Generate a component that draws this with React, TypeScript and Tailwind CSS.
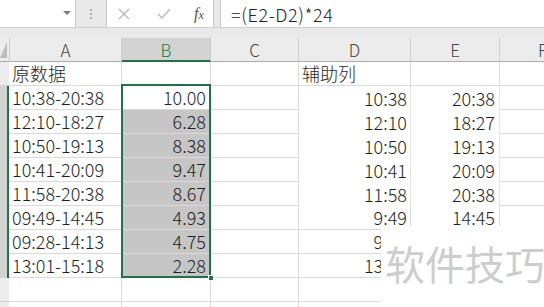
import React from "react";

const FONT = '"Noto Sans CJK SC", "Liberation Sans", sans-serif';

const rows: { a: string; b: string; d: string; e: string }[] = [
  { a: "原数据", b: "", d: "辅助列", e: "" },
  { a: "10:38-20:38", b: "10.00", d: "10:38", e: "20:38" },
  { a: "12:10-18:27", b: "6.28", d: "12:10", e: "18:27" },
  { a: "10:50-19:13", b: "8.38", d: "10:50", e: "19:13" },
  { a: "10:41-20:09", b: "9.47", d: "10:41", e: "20:09" },
  { a: "11:58-20:38", b: "8.67", d: "11:58", e: "20:38" },
  { a: "09:49-14:45", b: "4.93", d: "9:49", e: "14:45" },
  { a: "09:28-14:13", b: "4.75", d: "9:28", e: "14:13" },
  { a: "13:01-15:18", b: "2.28", d: "13:01", e: "15:18" },
  { a: "", b: "", d: "", e: "" },
  { a: "", b: "", d: "", e: "" },
];

export default function App() {
  return (
    <div
      className="relative w-[544px] h-[307px] overflow-hidden bg-white text-[#1f1f1f]"
      style={{ fontFamily: FONT }}
    >
      {/* formula bar */}
      <div className="flex h-[28px] bg-[#e9e9e9] border-b border-[#d0d0d0]">
        <div className="relative w-[76px] bg-white border-r border-[#c8c8c8]">
          <div className="absolute left-[63px] top-[11px] w-0 h-0 border-l-[4px] border-r-[4px] border-t-[4px] border-l-transparent border-r-transparent border-t-[#7a7a7a]" />
        </div>
        <div className="w-[30px] flex flex-col items-center justify-center gap-[2px]">
          <div className="w-[2px] h-[2px] bg-[#b0b0b0]" />
          <div className="w-[2px] h-[2px] bg-[#b0b0b0]" />
          <div className="w-[2px] h-[2px] bg-[#b0b0b0]" />
        </div>
        <div className="w-[108px] bg-white border-x border-[#c8c8c8] flex items-center">
          <svg width="12" height="12" viewBox="0 0 12 12" className="ml-[11px]">
            <path d="M1 1 L11 11 M11 1 L1 11" stroke="#b8b8b8" strokeWidth="1.3" />
          </svg>
          <svg width="14" height="12" viewBox="0 0 14 12" className="ml-[27px]">
            <path d="M1 6 L5 10 L13 1" stroke="#b8b8b8" strokeWidth="1.4" fill="none" />
          </svg>
          <span
            className="ml-[23px] text-[16px] italic text-[#555] leading-none"
            style={{ fontFamily: '"Liberation Serif", serif' }}
          >
            f<span className="text-[12px]">x</span>
          </span>
        </div>
        <div className="w-[6px]" />
        <div className="flex-1 bg-white border-l border-[#c8c8c8] flex items-center pl-[10px] text-[18px] font-light tracking-[0.6px] leading-none text-[#222] whitespace-nowrap">
          =(E2-D2)*24
        </div>
      </div>
      {/* gap */}
      <div className="h-[10px] bg-[#e9e9e9]" />
      {/* header row */}
      <div className="grid grid-cols-[9px_113px_89px_88px_112px_89px_1fr] h-[24px] bg-[#ececec] text-[17px] font-light text-[#444] leading-none">
        <div className="relative border-b border-[#ababab]">
          <div className="absolute left-0 bottom-[3px] w-0 h-0 border-b-[16px] border-l-[7px] border-l-transparent border-b-[#bdbdbd]" />
        </div>
        <div className="flex items-center justify-center border-l border-r border-b border-[#d0d0d0] border-b-[#ababab]">A</div>
        <div className="flex items-center justify-center bg-[#d3d3d3] text-[#217346] border-r border-[#c4c4c4] border-b-2 border-b-[#217346]">B</div>
        <div className="flex items-center justify-center border-r border-b border-[#d0d0d0] border-b-[#ababab]">C</div>
        <div className="flex items-center justify-center border-r border-b border-[#d0d0d0] border-b-[#ababab]">D</div>
        <div className="flex items-center justify-center border-r border-b border-[#d0d0d0] border-b-[#ababab]">E</div>
        <div className="flex items-center pl-[38px] border-b border-[#ababab]">F</div>
      </div>
      {/* grid */}
      <div className="grid grid-cols-[9px_113px_89px_88px_112px_89px_1fr] auto-rows-[24px] text-[18px] font-light leading-none">
        {rows.map((r, i) => {
          const sel = i >= 1 && i <= 8;
          const noH = i >= 1 && i <= 5;
          return (
            <React.Fragment key={i}>
              <div
                className={
                  sel
                    ? "bg-[#d3d3d3] border-r-2 border-[#217346]"
                    : "bg-[#ececec] border-b border-[#d0d0d0]"
                }
              />
              <div className="flex items-center pl-[3px] pb-[1px] border-r border-b border-[#dadada] whitespace-nowrap">
                {r.a}
              </div>
              <div
                className={
                  "flex items-center justify-end pr-[4px] pb-[1px] border-r border-b border-[#dadada] " +
                  (i >= 2 && i <= 8 ? "bg-[#c6c6c6]" : "")
                }
              >
                {r.b}
              </div>
              <div className="border-r border-b border-[#dadada]" />
              <div
                className={
                  "flex items-center pr-[3px] pb-[1px] border-r whitespace-nowrap " +
                  (i === 0 ? "justify-start pl-[3px] " : "justify-end ") +
                  (noH ? "border-[#e4e4e4]" : "border-b border-[#dadada]")
                }
              >
                {r.d}
              </div>
              <div
                className={
                  "flex items-center justify-end pr-[4px] pb-[1px] border-r whitespace-nowrap " +
                  (noH ? "border-[#e4e4e4]" : "border-b border-[#dadada]")
                }
              >
                {r.e}
              </div>
              <div className="border-b border-[#dadada]" />
            </React.Fragment>
          );
        })}
      </div>
      {/* selection border */}
      <div className="absolute left-[121px] top-[84px] w-[90px] h-[194px] border-2 border-[#217346] pointer-events-none" />
      <div className="absolute left-[208px] top-[275px] w-[6px] h-[6px] bg-[#217346] border border-white" />
      {/* watermark */}
      <div className="absolute left-[381px] top-[226px] w-[163px] h-[81px] bg-white pt-[17px] pl-[4px] whitespace-nowrap">
        <span className="text-[40px] leading-none text-[#cdcdcd]">软件技巧</span>
      </div>
    </div>
  );
}
